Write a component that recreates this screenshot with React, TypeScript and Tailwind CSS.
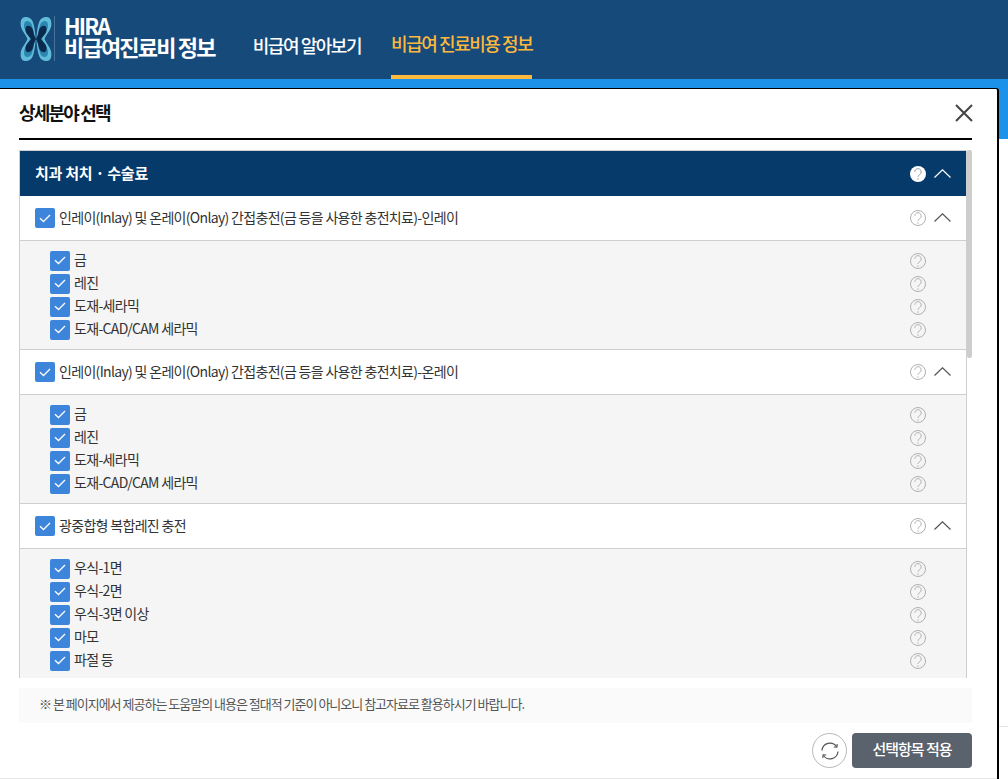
const font = "font-['Noto_Sans_CJK_KR','Noto_Sans',sans-serif]"

interface Group {
  title: string
  items: string[]
}

const groups: Group[] = [
  {
    title: "인레이(Inlay) 및 온레이(Onlay) 간접충전(금 등을 사용한 충전치료)-인레이",
    items: ["금", "레진", "도재-세라믹", "도재-CAD/CAM 세라믹"],
  },
  {
    title: "인레이(Inlay) 및 온레이(Onlay) 간접충전(금 등을 사용한 충전치료)-온레이",
    items: ["금", "레진", "도재-세라믹", "도재-CAD/CAM 세라믹"],
  },
  {
    title: "광중합형 복합레진 충전",
    items: ["우식-1면", "우식-2면", "우식-3면 이상", "마모", "파절 등"],
  },
]

function Logo() {
  return (
    <svg width="32" height="44" viewBox="0 0 32 44" className="shrink-0">
      <g fill="#62bcd9">
        <path d="M5 0c4-.5 7.500 2 8.500 7 .8 3 2 9 2 15s-1.200 12-2 15c-1 5-4.500 7.500-8.500 7-4-.5-5-5-4-10 1-4 5-8 6.500-12C6 18 2 14 1 10 0 5 1 .5 5 0Z" />
        <path d="M27 0c-4-.5-7.500 2-8.500 7-.8 3-2 9-2 15s1.200 12 2 15c1 5 4.500 7.500 8.500 7 4-.5 5-5 4-10-1-4-5-8-6.500-12C26 18 30 14 31 10c1-5 0-9.500-4-10Z" />
      </g>
      <g fill="#2a88b0">
        <path d="M7 4c3 0 5 2 5.500 6 .6 3 2 8 2 12s-1.400 9-2 12c-.5 4-2.500 6-5.500 6-3 0-3.500-4-2.500-7.500C5.500 29 9 26 10 22 9 18 5.500 15 4.500 11.500 3.500 8 4 4 7 4Z" />
        <path d="M25 4c-3 0-5 2-5.500 6-.6 3-2 8-2 12s1.400 9 2 12c.5 4 2.500 6 5.500 6 3 0 3.500-4 2.500-7.500C26.500 29 23 26 22 22c1-4 4.500-7 5.500-10.500C28.500 8 28 4 25 4Z" />
      </g>
      <g fill="#0b2a4e">
        <path d="M7 9c3-1 6 2 6.500 6 .3 2 1 4 2.500 7-1.500 3-2.200 5-2.500 7-.5 4-3.500 7-6.500 6-2-1-2-4-1-6.500 1-2.500 4-4.500 5-6.500-1-2-4-4-5-6.500-1-2.500-1-5.500 1-6.500Z" />
        <path d="M25 9c-3-1-6 2-6.500 6-.3 2-1 4-2.500 7 1.500 3 2.200 5 2.500 7 .5 4 3.500 7 6.500 6 2-1 2-4 1-6.500-1-2.500-4-4.500-5-6.500 1-2 4-4 5-6.500 1-2.500 1-5.500-1-6.500Z" />
      </g>
    </svg>
  )
}

function Help({ light }: { light?: boolean }) {
  const tone = light ? "#9a9a9a" : "#b0b0b0"
  return (
    <svg width="16" height="16" viewBox="0 0 16 16" fill="none" stroke={tone} className="shrink-0">
      {light ? <circle cx="8" cy="8" r="8" fill="#fff" stroke="none" /> : <circle cx="8" cy="8" r="7.500" />}
      <path d="M4.800 5.800a3.200 3.200 0 1 1 5 2.700C8.700 9.300 8 9.900 8 11" />
      <circle cx="8" cy="13" r=".7" fill={tone} stroke="none" />
    </svg>
  )
}

function Chevron({ color }: { color: string }) {
  return (
    <svg width="17" height="9" viewBox="0 0 17 9" fill="none" stroke={color} strokeWidth="1.200">
      <path d="M.5 8.500 8.500.8l8 7.700" />
    </svg>
  )
}

function Check() {
  return (
    <span className="flex h-5 w-5 shrink-0 items-center justify-center rounded-[2px] bg-[#3d85db]">
      <svg width="12" height="9" viewBox="0 0 12 9" fill="none" stroke="#fff" strokeWidth="1.300">
        <path d="M1 4.200 4.500 7.500 11 1" />
      </svg>
    </span>
  )
}

function GroupBlock({ group }: { group: Group }) {
  return (
    <div>
      <div className="flex h-[45px] items-center border-b border-[#cfcfcf] bg-white pl-[15px] pr-[15px]">
        <Check />
        <span className="ml-1 flex-1 pb-[2px] text-[14px] tracking-[-0.68px] text-[#333]">{group.title}</span>
        <Help />
        <span className="ml-2 -mt-0.5 flex w-[17px]">
          <Chevron color="#555" />
        </span>
      </div>
      <ul className="border-b border-[#cfcfcf] bg-[#f5f5f5] py-2 pl-[30px]">
        {group.items.map((item) => (
          <li key={item} className="flex h-[23px] items-center pr-10 text-[14px] tracking-[-0.68px] text-[#333]">
            <Check />
            <span className="ml-1 flex-1 pb-[2px]">{item}</span>
            <Help />
          </li>
        ))}
      </ul>
    </div>
  )
}

export default function App() {
  return (
    <div className={`relative h-[779px] w-[1008px] overflow-hidden bg-white ${font}`}>
      <header className="flex h-[79px] items-end bg-[#154a7b] pl-5">
        <div className="mb-[17px] flex items-center">
          <Logo />
          <div className="ml-[2px] h-[45px] w-px bg-[#4b7398]" />
          <div className="mb-[5px] ml-[9px] text-[22px] font-bold leading-[21px] tracking-[-1.8px] text-white">
            <div>HIRA</div>
            <div>비급여진료비 정보</div>
          </div>
        </div>
        <nav className="ml-[38px] flex gap-[30px] text-[18px] font-medium tracking-[-1.45px]">
          <a className="flex h-[79px] items-center pt-[12px] text-white">비급여 알아보기</a>
          <a className="flex h-[79px] items-center border-b-4 border-[#fdb93c] pt-[12px] text-[#fdb93c]">
            비급여 진료비용 정보
          </a>
        </nav>
      </header>
      <div className="h-[60px] bg-[#1c92e8]" />
      <div className="absolute left-[998px] right-0 top-[726px] h-px bg-[#e5e5e5]" />

      <section className="absolute left-0 top-[88px] flex h-[691px] w-[999px] flex-col rounded-tr-[3px] border-r-2 border-t border-black bg-white">
        <div className="ml-[19px] mr-[25px] flex h-[51px] shrink-0 items-center justify-between border-b-2 border-black pb-[2px]">
          <h2 className="text-[18px] font-bold tracking-[-1.8px] text-[#111]">상세분야 선택</h2>
          <svg width="18" height="18" viewBox="0 0 18 18" stroke="#444" strokeWidth="2" className="-mr-px">
            <path d="M1 1l16 16M17 1 1 17" />
          </svg>
        </div>

        <div className="ml-[19px] mr-[25px] mt-[10px] flex h-[528px] shrink-0 overflow-hidden">
          <div className="min-w-0 flex-1 border-x border-t border-[#cfcfcf]">
            <div className="flex h-[45px] items-center bg-[#063a6b] pl-[15px] pr-[15px]">
              <span className="flex-1 text-[15px] font-bold tracking-[-0.25px] text-white">치과 처치 · 수술료</span>
              <Help light />
              <span className="ml-2 flex w-[17px]">
                <Chevron color="#fff" />
              </span>
            </div>
            {groups.map((g) => (
              <GroupBlock key={g.title} group={g} />
            ))}
          </div>
          <div className="w-[5px] shrink-0">
            <div className="h-[208px] rounded-[2px] bg-[#cdcdcd]" />
          </div>
        </div>

        <p className="ml-[19px] mr-[25px] mt-[10px] flex h-[35px] shrink-0 items-center bg-[#fafafa] pb-1 pl-5 text-[13px] tracking-[-1px] text-[#555]">
          ※ 본 페이지에서 제공하는 도움말의 내용은 절대적 기준이 아니오니 참고자료로 활용하시기 바랍니다.
        </p>

        <div className="ml-[19px] mr-[25px] mt-[10px] flex justify-end gap-[5px]">
          <button className="flex h-[35px] w-[35px] items-center justify-center rounded-full border border-[#b9b9b9] bg-white">
            <svg width="20" height="20" viewBox="0 0 20 20" fill="none" stroke="#555" strokeWidth="1.200">
              <path d="M2 9.500a8 8 0 0 1 14.500-4M18 10.500a8 8 0 0 1-14.500 4" />
              <path d="m13.800 6 3 .2.500-3M6.200 14l-3-.2-.5 3" />
            </svg>
          </button>
          <button className="h-[35px] w-[120px] rounded-[4px] bg-[#59626d] pb-[2px] text-[15px] font-medium tracking-[-1px] text-white">
            선택항목 적용
          </button>
        </div>
        <div className="absolute bottom-0 left-0 right-0 h-px bg-[#e5e5e5]" />
      </section>
    </div>
  )
}
